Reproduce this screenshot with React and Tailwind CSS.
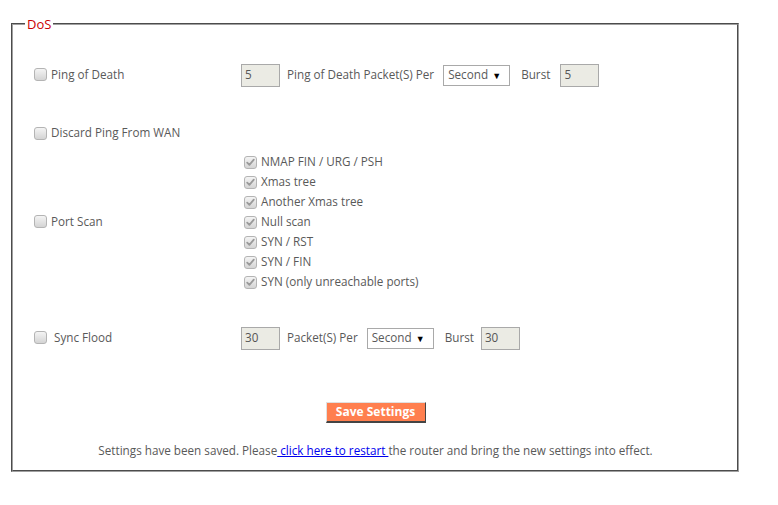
import React from "react";

function Box({ checked }) {
  return (
    <span className="inline-flex w-[13px] h-[13px] shrink-0 items-center justify-center rounded-[3px] border border-[#b4b4b4] bg-gradient-to-b from-[#f4f4f4] to-[#d4d4d4]">
      {checked && (
        <svg width="9" height="9" viewBox="0 0 9 9">
          <path d="M1.2 4.6 L3.4 6.9 L7.8 1.6" fill="none" stroke="#9a9a9a" strokeWidth="1.8" strokeLinecap="round" strokeLinejoin="round" />
        </svg>
      )}
    </span>
  );
}

function TextBox({ value }) {
  return (
    <div className="w-[39px] h-[23px] border border-[#a9a9a9] bg-[#ebebe4] pl-[3px] flex items-center text-[#555]">
      {value}
    </div>
  );
}

function Select() {
  return (
    <div className="w-[67px] h-[21px] border border-[#a9a9a9] bg-white flex items-center justify-between pl-[4px] pr-[8px]">
      <span>Second</span>
      <span className="text-[9px] text-black leading-none">▼</span>
    </div>
  );
}

const scans = [
  "NMAP FIN / URG / PSH",
  "Xmas tree",
  "Another Xmas tree",
  "Null scan",
  "SYN / RST",
  "SYN / FIN",
  "SYN (only unreachable ports)",
];

export default function App() {
  return (
    <div
      className="w-[778px] h-[505px] bg-white text-[11.7px] text-[#595959] overflow-hidden"
      style={{ fontFamily: '"Open Sans", "Liberation Sans", sans-serif' }}
    >
      <div className="pt-[15px] pl-[11px]">
        <fieldset className="w-[728px] h-[457px] border-2 [border-style:groove] border-[#a0a0a0] px-[12px] block">
          <legend className="px-[2px] text-[13px] leading-[18px] text-[#cc0000]">DoS</legend>
          <div className="flex flex-col pl-[1px]">
            {/* Ping of Death */}
            <div className="mt-[30px] h-[24px] flex items-center">
              <div className="w-[215px] flex items-center pl-[8px]">
                <Box />
                <span className="ml-[4px]">Ping of Death</span>
              </div>
              <TextBox value="5" />
              <span className="ml-[7px]">Ping of Death Packet(S) Per</span>
              <div className="ml-[9px]"><Select /></div>
              <span className="ml-[11px]">Burst</span>
              <div className="ml-[10px]"><TextBox value="5" /></div>
            </div>
            {/* Discard Ping */}
            <div className="mt-[34px] h-[24px] flex items-center pl-[8px]">
              <Box />
              <span className="ml-[4px]">Discard Ping From WAN</span>
            </div>
            {/* Port Scan */}
            <div className="mt-[7px] h-[140px] flex items-center">
              <div className="w-[215px] flex items-center pl-[8px]">
                <Box />
                <span className="ml-[4px]">Port Scan</span>
              </div>
              <div className="flex flex-col pl-[3px]">
                {scans.map((s) => (
                  <div key={s} className="h-[20px] flex items-center">
                    <Box checked />
                    <span className="ml-[4px]">{s}</span>
                  </div>
                ))}
              </div>
            </div>
            {/* Sync Flood */}
            <div className="mt-[34px] h-[24px] flex items-center">
              <div className="w-[215px] flex items-center pl-[8px]">
                <Box />
                <span className="ml-[7px]">Sync Flood</span>
              </div>
              <TextBox value="30" />
              <span className="ml-[7px]">Packet(S) Per</span>
              <div className="ml-[9px]"><Select /></div>
              <span className="ml-[11px]">Burst</span>
              <div className="ml-[7px]"><TextBox value="30" /></div>
            </div>
            {/* Save */}
            <div className="mt-[52px] flex justify-center">
              <button className="w-[100px] h-[21px] bg-[#ff7f4f] text-white font-bold text-[12px] border border-t-[#e0e0e0] border-l-[#e0e0e0] border-r-[#444] border-b-[#444] border-b-2 leading-none">
                Save Settings
              </button>
            </div>
            <div className="mt-[20px] h-[16px] flex items-center justify-center">
              <span>
                Settings have been saved. Please
                <a className="text-[#0000ee] underline" href="#"> click here to restart </a>
                the router and bring the new settings into effect.
              </span>
            </div>
          </div>
        </fieldset>
      </div>
    </div>
  );
}
